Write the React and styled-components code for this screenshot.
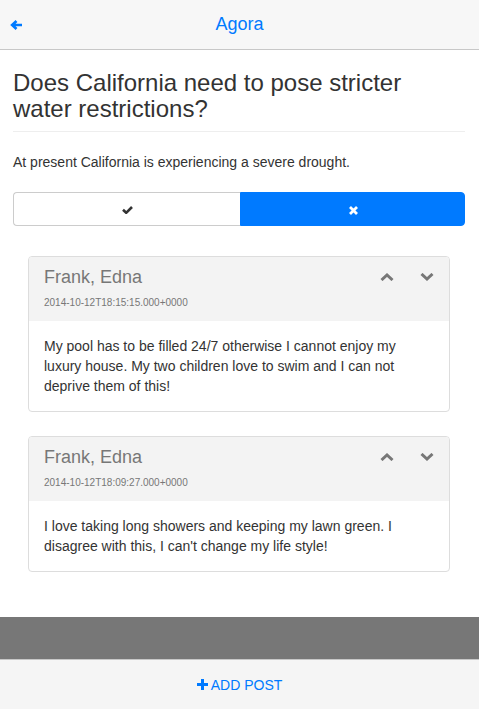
import React from "react";
import styled, { createGlobalStyle } from "styled-components";

const Global = createGlobalStyle`
  html, body { margin: 0; padding: 0; }
  body {
    font-family: "Liberation Sans", Arial, sans-serif;
    font-size: 14px;
    line-height: 20px;
    color: #333;
    background: #fff;
  }
  * { box-sizing: border-box; }
`;

const Svg = styled.svg`
  display: block;
  flex: none;
`;

const Icon = ({ w, h, d, sw = 2.8 }) => (
  <Svg width={w} height={h} viewBox={`0 0 ${w} ${h}`} fill="none">
    <path d={d} stroke="currentColor" strokeWidth={sw} strokeLinejoin="miter" strokeLinecap="butt" />
  </Svg>
);

const ArrowLeft = () => <Icon w={12} h={10} d="M6.5 1 L2.2 5 L6.5 9 M2.2 5 H12" sw={2.7} />;
const Check = () => <Icon w={11} h={8} d="M1 3.8 L4.2 6.8 L10 1" sw={2.6} />;
const Cross = () => <Icon w={9} h={9} d="M1 1 L8 8 M8 1 L1 8" sw={2.8} />;
const ChevUp = () => <Icon w={14} h={8} d="M1.5 7 L7 2 L12.5 7" sw={3} />;
const ChevDown = () => <Icon w={14} h={8} d="M1.5 1 L7 6 L12.5 1" sw={3} />;
const Plus = () => <Icon w={11} h={11} d="M5.5 0 V11 M0 5.5 H11" sw={3} />;

const Page = styled.div`
  height: 709px;
  display: flex;
  flex-direction: column;
`;

const NavBar = styled.header`
  height: 50px;
  flex: none;
  background: #f7f7f7;
  border-bottom: 1px solid #c8c8c8;
  display: grid;
  grid-template-columns: 50px 1fr 50px;
  align-items: center;
`;

const BackButton = styled.span`
  color: #007aff;
  display: flex;
  align-items: center;
  padding-left: 10px;
  margin-top: 1px;
`;

const NavTitle = styled.h1`
  margin: 0;
  text-align: center;
  font-size: 18px;
  font-weight: normal;
  color: #007aff;
  margin-top: -2px;
`;

const Main = styled.main`
  flex: 1;
  padding: 0 14px 0 13px;
  overflow: hidden;
`;

const Title = styled.h3`
  margin: 20px 0 0;
  padding-bottom: 8px;
  border-bottom: 1px solid #eee;
  font-size: 24px;
  font-weight: normal;
  line-height: 26.4px;
  color: #333;
`;

const Lead = styled.p`
  margin: 20px 0 20px;
  font-size: 14px;
  line-height: 20px;
`;

const VoteGroup = styled.div`
  display: grid;
  grid-template-columns: 227px 1fr;
  height: 34px;
`;

const VoteButton = styled.button`
  border: 1px solid ${(p) => (p.$active ? "#007aff" : "#ccc")};
  background: ${(p) => (p.$active ? "#007aff" : "#fff")};
  color: ${(p) => (p.$active ? "#fff" : "#333")};
  border-radius: ${(p) => (p.$side === "left" ? "4px 0 0 4px" : "0 4px 4px 0")};
  ${(p) => (p.$side === "left" ? "border-right: none;" : "")}
  display: flex;
  align-items: center;
  justify-content: center;
  padding: 0;
  padding-top: 3px;
  padding-left: ${(p) => (p.$side === "left" ? "0" : "2px")};
`;

const PostList = styled.div`
  margin: 30px 15px 0;
  display: flex;
  flex-direction: column;
  gap: 24px;
`;

const Card = styled.article`
  border: 1px solid #ddd;
  border-radius: 4px;
  background: #fff;
  overflow: hidden;
`;

const CardHeader = styled.div`
  background: #f3f3f3;
  padding: 10px 15px 11px;
  display: flex;
  justify-content: space-between;
`;

const Author = styled.h4`
  margin: 0;
  font-size: 18px;
  font-weight: normal;
  line-height: 20px;
  color: #777;
`;

const Stamp = styled.div`
  margin-top: 9px;
  font-size: 10px;
  line-height: 14px;
  color: #777;
`;

const VoteIcons = styled.div`
  display: flex;
  gap: 26px;
  color: #777;
  padding-top: 6px;
  height: 16px;
  align-items: flex-start;
`;

const CardBody = styled.div`
  padding: 15px;
  font-size: 14px;
  line-height: 20px;
  color: #333;
`;

const Backdrop = styled.div`
  height: 42px;
  flex: none;
  background: #777;
`;

const Footer = styled.footer`
  height: 50px;
  flex: none;
  background: #f5f5f5;
  border-top: 1px solid #c8c8c8;
  display: flex;
  align-items: center;
  justify-content: center;
  color: #007aff;
  font-size: 14px;
  gap: 3px;
`;

const posts = [
  {
    date: "2014-10-12T18:15:15.000+0000",
    text: "My pool has to be filled 24/7 otherwise I cannot enjoy my luxury house. My two children love to swim and I can not deprive them of this!",
  },
  {
    date: "2014-10-12T18:09:27.000+0000",
    text: "I love taking long showers and keeping my lawn green. I disagree with this, I can't change my life style!",
  },
];

export default function App() {
  return (
    <Page>
      <Global />
      <NavBar>
        <BackButton><ArrowLeft /></BackButton>
        <NavTitle>Agora</NavTitle>
        <span />
      </NavBar>
      <Main>
        <Title>Does California need to pose stricter water restrictions?</Title>
        <Lead>At present California is experiencing a severe drought.</Lead>
        <VoteGroup>
          <VoteButton $side="left"><Check /></VoteButton>
          <VoteButton $side="right" $active><Cross /></VoteButton>
        </VoteGroup>
        <PostList>
          {posts.map((p) => (
            <Card key={p.date}>
              <CardHeader>
                <div>
                  <Author>Frank, Edna</Author>
                  <Stamp>{p.date}</Stamp>
                </div>
                <VoteIcons>
                  <ChevUp />
                  <ChevDown />
                </VoteIcons>
              </CardHeader>
              <CardBody>{p.text}</CardBody>
            </Card>
          ))}
        </PostList>
      </Main>
      <Backdrop />
      <Footer>
        <Plus />
        <span>ADD POST</span>
      </Footer>
    </Page>
  );
}
